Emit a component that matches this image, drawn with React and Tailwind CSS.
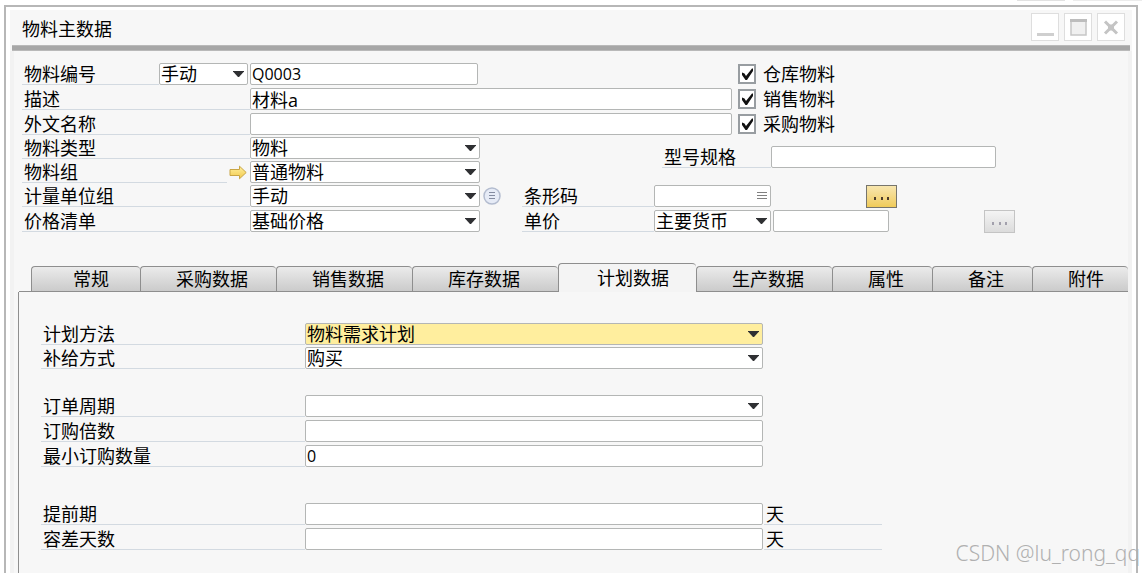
import { useState } from "react";

const fieldStyle =
  "h-[22px] rounded-[2px] border border-[#b4b6b5] px-px leading-5 text-black outline-none focus:border-[#8c8c8c]";

const tabs = [
  { name: "常规", pad: "pl-[41px] pr-[31px]" },
  { name: "采购数据", pad: "pl-[35px] pr-7" },
  { name: "销售数据", pad: "pl-[35px] pr-7" },
  { name: "库存数据", pad: "pl-[35px] pr-[38px]" },
  { name: "计划数据", pad: "pl-[38px] pr-[27px]" },
  { name: "生产数据", pad: "pl-[35px] pr-7" },
  { name: "属性", pad: "pl-[35px] pr-7" },
  { name: "备注", pad: "pl-[35px] pr-7" },
  { name: "附件", pad: "grow pl-[35px]" },
];

function Label({ htmlFor, width, children }) {
  return (
    <label
      htmlFor={htmlFor}
      className={`${width} h-[22px] shrink-0 border-b border-[#d3dae1] pl-0.5 leading-[22px]`}
    >
      {children}
    </label>
  );
}

function TextField({ id, width, value = "", label }) {
  return (
    <input
      id={id}
      type="text"
      aria-label={label}
      defaultValue={value}
      className={`${fieldStyle} ${width} shrink-0 bg-white`}
    />
  );
}

function SelectField({ id, width, options, highlight }) {
  return (
    <div className={`relative h-[22px] shrink-0 ${width}`}>
      <select
        id={id}
        className={`${fieldStyle} block w-full appearance-none ${highlight ? "bg-[#ffee9e]" : "bg-white"}`}
      >
        {options.map((option) => (
          <option key={option}>{option}</option>
        ))}
      </select>
      <svg
        className="pointer-events-none absolute right-1 top-2 h-[6px] w-[11px]"
        viewBox="0 0 11 6"
        fill="#2f3033"
      >
        <path d="M0 0h11v0.500L6 6H5L0 0.500z" />
      </svg>
    </div>
  );
}

function Row({ children }) {
  return <div className="flex h-6 items-start">{children}</div>;
}

function CheckRow({ id, children }) {
  return (
    <div className="flex h-6 items-start">
      <span className="relative mt-px h-5 w-[18px] shrink-0">
        <input
          id={id}
          type="checkbox"
          defaultChecked
          className="peer block h-5 w-[18px] appearance-none border-2 border-[#989da1] bg-white"
        />
        <svg
          className="pointer-events-none absolute left-0 top-0 hidden h-5 w-[18px] peer-checked:block"
          viewBox="0 0 18 20"
          fill="#111"
        >
          <path d="M4 8.500l2.500 1L8 12l6-7.500h1V7L9 16H7.500L4 11z" />
        </svg>
      </span>
      <label htmlFor={id} className="pl-[7px] leading-[22px]">
        {children}
      </label>
    </div>
  );
}

function WindowButton({ label, children }) {
  return (
    <button
      type="button"
      aria-label={label}
      className="h-7 w-7 border border-[#dedede] bg-white"
    >
      <svg className="h-[26px] w-[26px]" viewBox="0 0 26 26" fill="none">
        {children}
      </svg>
    </button>
  );
}

function PlanningData() {
  return (
    <div className="flex flex-col pl-[22px] pt-[31px]">
      <Row>
        <Label htmlFor="method" width="w-[264px]">计划方法</Label>
        <SelectField id="method" width="w-[458px]" options={["物料需求计划", "无"]} highlight />
      </Row>
      <Row>
        <Label htmlFor="procurement" width="w-[264px]">补给方式</Label>
        <SelectField id="procurement" width="w-[458px]" options={["购买", "生产"]} />
      </Row>

      <div className="mt-6 flex flex-col gap-px">
        <Row>
          <Label htmlFor="interval" width="w-[264px]">订单周期</Label>
          <SelectField id="interval" width="w-[458px]" options={[""]} />
        </Row>
        <Row>
          <Label htmlFor="multiple" width="w-[264px]">订购倍数</Label>
          <TextField id="multiple" width="w-[458px] text-base" />
        </Row>
        <Row>
          <Label htmlFor="minQty" width="w-[264px]">最小订购数量</Label>
          <TextField id="minQty" width="w-[458px] text-base" value="0" />
        </Row>
      </div>

      <div className="mt-[34px] flex flex-col gap-px">
        <Row>
          <Label htmlFor="leadTime" width="w-[264px]">提前期</Label>
          <TextField id="leadTime" width="w-[458px] mr-px text-base" />
          <Label htmlFor="leadTime" width="w-[118px]">天</Label>
        </Row>
        <Row>
          <Label htmlFor="tolerance" width="w-[264px]">容差天数</Label>
          <TextField id="tolerance" width="w-[458px] mr-px text-base" />
          <Label htmlFor="tolerance" width="w-[118px]">天</Label>
        </Row>
      </div>
    </div>
  );
}

export default function App() {
  const [active, setActive] = useState("计划数据");

  return (
    <div className="relative flex min-h-screen flex-col overflow-hidden bg-white font-['Open_Sans','Noto_Sans_CJK_SC',sans-serif] text-lg text-black">
      {/* edge of the toolbar above the window */}
      <div className="flex h-[5px] items-start justify-end gap-2">
        <div className="h-px w-12 bg-[#e2e2e2]" />
        <div className="h-px w-[69px] bg-[#ececec]" />
      </div>

      <div className="mx-1 flex grow flex-col border-x-2 border-t-2 border-[#b7b7b7] px-1 pt-[3px]">
        <header className="flex h-[35px] items-start justify-between bg-[#f7f7f7] pl-3 pr-[7px] pt-[3px]">
          <h1 className="leading-8">物料主数据</h1>
          <div className="flex gap-[5px]">
            <WindowButton label="最小化">
              <path d="M5 20.500h17" stroke="#cfcfcf" strokeWidth="3" />
            </WindowButton>
            <WindowButton label="最大化">
              <path d="M6 6h15v15H6z" fill="#f0f0f0" stroke="#c6c6c6" strokeWidth="1.500" />
              <path d="M5 6.500h17" stroke="#bdbdbd" strokeWidth="3" />
            </WindowButton>
            <WindowButton label="关闭">
              <path d="M7 7.500l12 12M19 7.500l-12 12" stroke="#c4c4c4" strokeWidth="3" />
              <path d="M10 10.500h6v6h-6z" fill="#c4c4c4" />
            </WindowButton>
          </div>
        </header>
        <div className="bg-[#f7f7f7] px-0.5">
          <div className="h-1.5 border-y border-[#b9b9b9] bg-[#a7a7a7]" />
        </div>

        <main className="flex grow flex-col border-x-4 border-[#f2f2f2] bg-[#f7f7f7] pt-3">
          <div className="flex flex-col pl-2">
            <div className="flex">
              <div className="flex w-[710px] shrink-0 flex-col gap-px">
                <Row>
                  <Label htmlFor="itemNo" width="w-[137px]">物料编号</Label>
                  <SelectField id="series" width="w-[89px] mr-0.5" options={["手动"]} />
                  <TextField id="itemNo" width="w-[228px] text-base" value="Q0003" />
                </Row>
                <Row>
                  <Label htmlFor="description" width="w-[228px]">描述</Label>
                  <TextField id="description" width="w-[482px]" value="材料a" />
                </Row>
                <Row>
                  <Label htmlFor="foreignName" width="w-[228px]">外文名称</Label>
                  <TextField id="foreignName" width="w-[482px]" />
                </Row>
              </div>
              <div className="flex flex-col gap-px pl-1.5">
                <CheckRow id="inventoryItem">仓库物料</CheckRow>
                <CheckRow id="salesItem">销售物料</CheckRow>
                <CheckRow id="purchaseItem">采购物料</CheckRow>
              </div>
            </div>

            <div className="flex">
              <div className="w-[458px] shrink-0">
                <Row>
                  <Label htmlFor="itemType" width="w-[228px]">物料类型</Label>
                  <SelectField id="itemType" width="w-[230px]" options={["物料"]} />
                </Row>
                <Row>
                  <Label htmlFor="itemGroup" width="w-[205px]">物料组</Label>
                  <button type="button" aria-label="打开物料组" className="flex h-[22px] w-[23px] shrink-0 items-center pl-0.5">
                    <svg className="h-[15px] w-[18px]" viewBox="0 0 18 15">
                      <defs>
                        <linearGradient id="gold" x1="0" y1="0" x2="0" y2="1">
                          <stop offset="0" stopColor="#fff0a0" />
                          <stop offset="1" stopColor="#f2c94a" />
                        </linearGradient>
                      </defs>
                      <path
                        d="M1 4.500h9.500V1.200L17.200 7.500l-6.700 6.300v-3.300H1z"
                        fill="url(#gold)"
                        stroke="#c9a544"
                      />
                    </svg>
                  </button>
                  <SelectField id="itemGroup" width="w-[230px]" options={["普通物料"]} />
                </Row>
              </div>
              <div className="flex pl-[182px] pt-[9px]">
                <Label htmlFor="spec" width="w-[109px]">型号规格</Label>
                <TextField id="spec" width="w-[225px] text-base" />
              </div>
            </div>

            <div className="flex flex-col gap-px">
              <Row>
                <Label htmlFor="uomGroup" width="w-[228px]">计量单位组</Label>
                <SelectField id="uomGroup" width="w-[230px]" options={["手动"]} />
                <button type="button" aria-label="计量单位明细" className="flex h-[22px] w-[42px] shrink-0 items-center pl-[3px]">
                  <svg className="h-[18px] w-[18px]" viewBox="0 0 18 18">
                    <circle cx="9" cy="9" r="8" fill="#e6ebf6" stroke="#b3bccf" strokeWidth="1.500" />
                    <path d="M6 5.500h6M6 8.500h6M6 11.500h6" stroke="#838ba0" />
                  </svg>
                </button>
                <Label htmlFor="barcode" width="w-[132px]">条形码</Label>
                <div className="relative h-[22px] w-[212px] shrink-0">
                  <TextField id="barcode" width="w-[117px] block text-base" />
                  <svg
                    className="pointer-events-none absolute left-[103px] top-[6px] h-[10px] w-[10px]"
                    viewBox="0 0 10 10"
                  >
                    <path d="M0 1.500h10M0 4.500h10M0 7.500h10" stroke="#808080" />
                  </svg>
                </div>
                <button
                  type="button"
                  aria-label="条形码列表"
                  className="flex h-[23px] w-[31px] shrink-0 items-center justify-center border border-[#77756c] bg-linear-to-b from-[#f8e6ae] to-[#f0cb58] pt-1"
                >
                  <svg className="h-[3px] w-4" viewBox="0 0 16 3" fill="#4c3d2c">
                    <path d="M0 0h2v3H0zM7 0h2v3H7zM13 0h2v3h-2z" />
                  </svg>
                </button>
              </Row>
              <Row>
                <Label htmlFor="priceList" width="w-[228px]">价格清单</Label>
                <SelectField id="priceList" width="w-[230px] mr-[42px]" options={["基础价格"]} />
                <Label htmlFor="currency" width="w-[132px]">单价</Label>
                <SelectField id="currency" width="w-[117px] mr-0.5" options={["主要货币"]} />
                <TextField width="w-[116px] mr-[95px] text-base" label="单价金额" />
                <button
                  type="button"
                  aria-label="价格明细"
                  className="flex h-[23px] w-[31px] shrink-0 items-center justify-center border border-[#c4c4c4] bg-linear-to-b from-[#f4f4f4] to-[#dcdcdc] pt-1"
                >
                  <svg className="h-[3px] w-4" viewBox="0 0 16 3" fill="#a2a0ac">
                    <path d="M0 0h2v3H0zM7 0h2v3H7zM13 0h2v3h-2z" />
                  </svg>
                </button>
              </Row>
            </div>
          </div>

          <div role="tablist" className="mt-[29px] flex h-[29px] items-end overflow-hidden pl-[17px]">
            {tabs.map((tab) => (
              <button
                key={tab.name}
                type="button"
                role="tab"
                aria-selected={active === tab.name}
                onClick={() => setActive(tab.name)}
                className={`${tab.pad} rounded-t-[4px] border-l border-t border-[#8e8e8e] text-left leading-6 whitespace-nowrap ${
                  active === tab.name
                    ? "h-[29px] bg-[#f4f4f4]"
                    : "h-[26px] border-b bg-linear-to-b from-[#ebebeb] to-[#cbcbcb]"
                }`}
              >
                {tab.name}
              </button>
            ))}
          </div>
          <div className="ml-1 flex grow flex-col border-l border-[#8e8e8e]">
            {/* short piece of the frame left of the first tab */}
            <div className="-mt-px h-px w-3 bg-[#8e8e8e]" />
            {active === "计划数据" && <PlanningData />}
          </div>
        </main>
      </div>

      <div className="pointer-events-none absolute bottom-1 right-0.5 font-['Noto_Sans',sans-serif] text-[21px] leading-8 font-light text-[#b0b0b0]">
        CSDN @lu_rong_qq
      </div>
    </div>
  );
}
